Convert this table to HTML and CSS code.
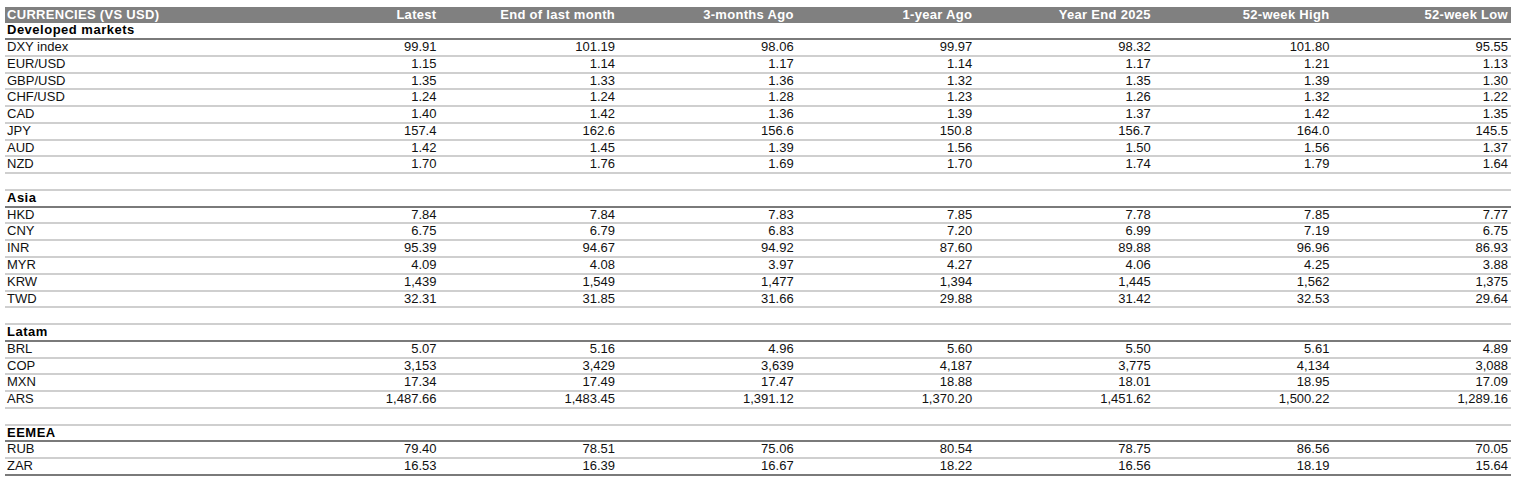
FILE: index.html
```html
<!DOCTYPE html>
<html lang="en">
<head>
<meta charset="utf-8">
<title>Currencies (vs USD)</title>
<link rel="stylesheet" href="styles.css">
</head>
<body>
<div class="table">
  <div class="row head">
    <div class="c name">CURRENCIES (VS USD)</div>
    <div class="c">Latest</div>
    <div class="c">End of last month</div>
    <div class="c">3-months Ago</div>
    <div class="c">1-year Ago</div>
    <div class="c">Year End 2025</div>
    <div class="c">52-week High</div>
    <div class="c">52-week Low</div>
  </div>

  <div class="row section"><div class="c name">Developed markets</div></div>
  <div class="row"><div class="c name">DXY index</div><div class="c">99.91</div><div class="c">101.19</div><div class="c">98.06</div><div class="c">99.97</div><div class="c">98.32</div><div class="c">101.80</div><div class="c">95.55</div></div>
  <div class="row"><div class="c name">EUR/USD</div><div class="c">1.15</div><div class="c">1.14</div><div class="c">1.17</div><div class="c">1.14</div><div class="c">1.17</div><div class="c">1.21</div><div class="c">1.13</div></div>
  <div class="row"><div class="c name">GBP/USD</div><div class="c">1.35</div><div class="c">1.33</div><div class="c">1.36</div><div class="c">1.32</div><div class="c">1.35</div><div class="c">1.39</div><div class="c">1.30</div></div>
  <div class="row"><div class="c name">CHF/USD</div><div class="c">1.24</div><div class="c">1.24</div><div class="c">1.28</div><div class="c">1.23</div><div class="c">1.26</div><div class="c">1.32</div><div class="c">1.22</div></div>
  <div class="row"><div class="c name">CAD</div><div class="c">1.40</div><div class="c">1.42</div><div class="c">1.36</div><div class="c">1.39</div><div class="c">1.37</div><div class="c">1.42</div><div class="c">1.35</div></div>
  <div class="row"><div class="c name">JPY</div><div class="c">157.4</div><div class="c">162.6</div><div class="c">156.6</div><div class="c">150.8</div><div class="c">156.7</div><div class="c">164.0</div><div class="c">145.5</div></div>
  <div class="row"><div class="c name">AUD</div><div class="c">1.42</div><div class="c">1.45</div><div class="c">1.39</div><div class="c">1.56</div><div class="c">1.50</div><div class="c">1.56</div><div class="c">1.37</div></div>
  <div class="row"><div class="c name">NZD</div><div class="c">1.70</div><div class="c">1.76</div><div class="c">1.69</div><div class="c">1.70</div><div class="c">1.74</div><div class="c">1.79</div><div class="c">1.64</div></div>
  <div class="row blank"></div>

  <div class="row section"><div class="c name">Asia</div></div>
  <div class="row"><div class="c name">HKD</div><div class="c">7.84</div><div class="c">7.84</div><div class="c">7.83</div><div class="c">7.85</div><div class="c">7.78</div><div class="c">7.85</div><div class="c">7.77</div></div>
  <div class="row"><div class="c name">CNY</div><div class="c">6.75</div><div class="c">6.79</div><div class="c">6.83</div><div class="c">7.20</div><div class="c">6.99</div><div class="c">7.19</div><div class="c">6.75</div></div>
  <div class="row"><div class="c name">INR</div><div class="c">95.39</div><div class="c">94.67</div><div class="c">94.92</div><div class="c">87.60</div><div class="c">89.88</div><div class="c">96.96</div><div class="c">86.93</div></div>
  <div class="row"><div class="c name">MYR</div><div class="c">4.09</div><div class="c">4.08</div><div class="c">3.97</div><div class="c">4.27</div><div class="c">4.06</div><div class="c">4.25</div><div class="c">3.88</div></div>
  <div class="row"><div class="c name">KRW</div><div class="c">1,439</div><div class="c">1,549</div><div class="c">1,477</div><div class="c">1,394</div><div class="c">1,445</div><div class="c">1,562</div><div class="c">1,375</div></div>
  <div class="row"><div class="c name">TWD</div><div class="c">32.31</div><div class="c">31.85</div><div class="c">31.66</div><div class="c">29.88</div><div class="c">31.42</div><div class="c">32.53</div><div class="c">29.64</div></div>
  <div class="row blank"></div>

  <div class="row section"><div class="c name">Latam</div></div>
  <div class="row"><div class="c name">BRL</div><div class="c">5.07</div><div class="c">5.16</div><div class="c">4.96</div><div class="c">5.60</div><div class="c">5.50</div><div class="c">5.61</div><div class="c">4.89</div></div>
  <div class="row"><div class="c name">COP</div><div class="c">3,153</div><div class="c">3,429</div><div class="c">3,639</div><div class="c">4,187</div><div class="c">3,775</div><div class="c">4,134</div><div class="c">3,088</div></div>
  <div class="row"><div class="c name">MXN</div><div class="c">17.34</div><div class="c">17.49</div><div class="c">17.47</div><div class="c">18.88</div><div class="c">18.01</div><div class="c">18.95</div><div class="c">17.09</div></div>
  <div class="row"><div class="c name">ARS</div><div class="c">1,487.66</div><div class="c">1,483.45</div><div class="c">1,391.12</div><div class="c">1,370.20</div><div class="c">1,451.62</div><div class="c">1,500.22</div><div class="c">1,289.16</div></div>
  <div class="row blank"></div>

  <div class="row section"><div class="c name">EEMEA</div></div>
  <div class="row"><div class="c name">RUB</div><div class="c">79.40</div><div class="c">78.51</div><div class="c">75.06</div><div class="c">80.54</div><div class="c">78.75</div><div class="c">86.56</div><div class="c">70.05</div></div>
  <div class="row last"><div class="c name">ZAR</div><div class="c">16.53</div><div class="c">16.39</div><div class="c">16.67</div><div class="c">18.22</div><div class="c">16.56</div><div class="c">18.19</div><div class="c">15.64</div></div>
</div>
</body>
</html>
```

FILE: styles.css
```css
html, body {
  margin: 0;
  padding: 0;
  background: #ffffff;
}

body {
  font-family: "Liberation Sans", Arial, sans-serif;
  font-size: 13px;
  color: #111111;
}

.table {
  width: 1506px;
  margin: 6.5px 0 0 5px;
}

.row {
  display: grid;
  grid-template-columns: 255.9px repeat(7, 1fr);
  height: 16.77px;
  box-sizing: border-box;
  border-bottom: 2px solid #cfcfcf;
  line-height: 14.77px;
}

.c {
  text-align: right;
  padding-right: 3px;
  white-space: nowrap;
  min-width: 0;
}

.c.name {
  text-align: left;
  padding-left: 2px;
  padding-right: 0;
}

.row.head {
  background: #808080;
  color: #ffffff;
  font-weight: bold;
  letter-spacing: 0.3px;
  border-bottom: none;
  line-height: 16.77px;
}

.row.section {
  font-weight: bold;
  letter-spacing: 0.5px;
  color: #000000;
  border-bottom: 2px solid #7a7a7a;
}

.row.last {
  border-bottom: 2px solid #7a7a7a;
}
```
